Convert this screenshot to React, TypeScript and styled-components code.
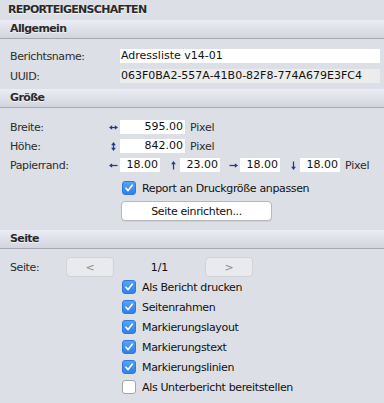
import React from 'react';
import styled, { createGlobalStyle } from 'styled-components';

const GlobalStyle = createGlobalStyle`
  html, body {
    margin: 0;
    padding: 0;
    background: #dcdfe5;
  }
  body {
    font-family: "DejaVu Sans", Verdana, sans-serif;
    font-size: 11px;
    color: #262626;
  }
`;

type Dir = 'left' | 'right' | 'up' | 'down' | 'horizontal' | 'vertical';

const rotation: Record<Dir, number> = {
  right: 0,
  down: 90,
  left: 180,
  up: 270,
  horizontal: 0,
  vertical: 90,
};

function Arrow({ dir }: { dir: Dir }) {
  const both = dir === 'horizontal' || dir === 'vertical';
  return (
    <ArrowSvg viewBox="0 0 10 10" $deg={rotation[dir]}>
      <line x1={both ? 3 : 0.5} y1="5" x2="7" y2="5" stroke="#1f3c8c" strokeWidth="1.4" />
      <polygon points="10,5 6.5,2.4 6.5,7.6" fill="#1f3c8c" />
      {both && <polygon points="0,5 3.5,2.4 3.5,7.6" fill="#1f3c8c" />}
    </ArrowSvg>
  );
}

function Checkbox({ checked, label }: { checked: boolean; label: string }) {
  return (
    <CheckRow>
      <Box $checked={checked}>
        {checked && (
          <svg width="10" height="10" viewBox="0 0 10 10">
            <path d="M2 5.2 L4.1 7.6 L8.2 2.2" fill="none" stroke="#fff" strokeWidth="1.6" strokeLinecap="round" strokeLinejoin="round" />
          </svg>
        )}
      </Box>
      <CheckLabel>{label}</CheckLabel>
    </CheckRow>
  );
}

const margins: { dir: Dir; value: string }[] = [
  { dir: 'left', value: '18.00' },
  { dir: 'up', value: '23.00' },
  { dir: 'right', value: '18.00' },
  { dir: 'down', value: '18.00' },
];

const pageOptions = [
  { label: 'Als Bericht drucken', checked: true },
  { label: 'Seitenrahmen', checked: true },
  { label: 'Markierungslayout', checked: true },
  { label: 'Markierungstext', checked: true },
  { label: 'Markierungslinien', checked: true },
  { label: 'Als Unterbericht bereitstellen', checked: false },
];

export default function App() {
  return (
    <Panel>
      <GlobalStyle />
      <Title>REPORTEIGENSCHAFTEN</Title>

      <SectionHeader>Allgemein</SectionHeader>
      <Body $top={10} $bottom={6} $gap={6}>
        <Row>
          <Label>Berichtsname:</Label>
          <Field>Adressliste v14-01</Field>
        </Row>
        <Row>
          <Label>UUID:</Label>
          <Field $readOnly>063F0BA2-557A-41B0-82F8-774A679E3FC4</Field>
        </Row>
      </Body>

      <SectionHeader>Größe</SectionHeader>
      <Body $top={12} $bottom={9} $gap={5}>
        <Row>
          <Label $width={90}>Breite:</Label>
          <ArrowCell><Arrow dir="horizontal" /></ArrowCell>
          <Field $width={65} $right>595.00</Field>
          <Unit>Pixel</Unit>
        </Row>
        <Row>
          <Label $width={90}>Höhe:</Label>
          <ArrowCell><Arrow dir="vertical" /></ArrowCell>
          <Field $width={65} $right>842.00</Field>
          <Unit>Pixel</Unit>
        </Row>
        <Row>
          <Label $width={90}>Papierrand:</Label>
          {margins.map((m, i) => (
            <React.Fragment key={i}>
              <ArrowCell><Arrow dir={m.dir} /></ArrowCell>
              <Field $width={40} $right>{m.value}</Field>
            </React.Fragment>
          ))}
          <Unit>Pixel</Unit>
        </Row>
        <ReportCheck>
          <Checkbox checked label="Report an Druckgröße anpassen" />
        </ReportCheck>
        <PushButton>Seite einrichten...</PushButton>
      </Body>

      <SectionHeader>Seite</SectionHeader>
      <Body $top={8} $bottom={6} $gap={0}>
        <PagerRow>
          <Label $width={56}>Seite:</Label>
          <NavButton>&lt;</NavButton>
          <PageCount>1/1</PageCount>
          <NavButton>&gt;</NavButton>
        </PagerRow>
        {pageOptions.map((o) => (
          <Checkbox key={o.label} checked={o.checked} label={o.label} />
        ))}
      </Body>
    </Panel>
  );
}

const Panel = styled.div`
  width: 384px;
  display: flex;
  flex-direction: column;
  background: #dcdfe5;
`;

const Title = styled.div`
  height: 20px;
  box-sizing: border-box;
  padding: 3px 8px 0;
  line-height: 13px;
  font-weight: bold;
  letter-spacing: -0.7px;
  color: #2a2a2a;
  text-shadow: 0 1px 1px rgba(255, 255, 255, 0.7);
`;

const SectionHeader = styled.div`
  height: 18px;
  line-height: 18px;
  padding: 0 10px;
  background: linear-gradient(#ebecf4, #d3d5de);
  border-bottom: 1px solid #a6a9b0;
  font-weight: bold;
  letter-spacing: -0.6px;
  color: #2a2a2a;
  text-shadow: 0 1px 1px rgba(255, 255, 255, 0.7);
`;

const Body = styled.div<{ $top: number; $bottom: number; $gap: number }>`
  display: flex;
  flex-direction: column;
  gap: ${({ $gap }) => $gap}px;
  padding: ${({ $top }) => $top}px 4px ${({ $bottom }) => $bottom}px 10px;
`;

const Row = styled.div`
  display: flex;
  align-items: center;
  height: 14px;
`;

const Label = styled.div<{ $width?: number }>`
  flex: none;
  width: ${({ $width = 110 }) => $width}px;
  letter-spacing: -0.4px;
  color: #2c2c2c;
`;

const Field = styled.div<{ $readOnly?: boolean; $width?: number; $right?: boolean }>`
  ${({ $width }) => ($width ? `width: ${$width}px; flex: none;` : 'flex: 1;')}
  box-sizing: border-box;
  height: 14px;
  line-height: 14px;
  padding: 0 2px 0 1px;
  text-align: ${({ $right }) => ($right ? 'right' : 'left')};
  background: ${({ $readOnly }) => ($readOnly ? '#ececec' : '#ffffff')};
  color: #111;
  white-space: nowrap;
  overflow: hidden;
`;

const ArrowCell = styled.div`
  flex: none;
  width: 20px;
  display: flex;
  justify-content: flex-end;
  padding-right: 2px;
  box-sizing: border-box;
`;

const ArrowSvg = styled.svg<{ $deg: number }>`
  width: 9px;
  height: 9px;
  transform: rotate(${({ $deg }) => $deg}deg);
`;

const Unit = styled.span`
  margin-left: 5px;
  letter-spacing: -0.2px;
  color: #2c2c2c;
`;

const ReportCheck = styled.div`
  margin-top: 3px;
  height: 16px;
  display: flex;
  align-items: center;
`;

const CheckRow = styled.div`
  display: flex;
  align-items: center;
  gap: 6px;
  height: 20px;
  padding-left: 112px;
`;

const Box = styled.span<{ $checked: boolean }>`
  flex: none;
  width: 14px;
  height: 14px;
  box-sizing: border-box;
  border-radius: 3px;
  display: flex;
  align-items: center;
  justify-content: center;
  background: ${({ $checked }) => ($checked ? 'linear-gradient(#55a3f7, #2f7fe9)' : '#ffffff')};
  border: 1px solid ${({ $checked }) => ($checked ? '#2f78dc' : '#a5a5a5')};
`;

const CheckLabel = styled.span`
  letter-spacing: -0.35px;
  color: #111;
`;

const PushButton = styled.div`
  width: 151px;
  height: 20px;
  box-sizing: border-box;
  margin-left: 111px;
  display: flex;
  align-items: center;
  justify-content: center;
  background: #ffffff;
  border: 1px solid #b7b8bb;
  border-radius: 4px;
  box-shadow: 0 1px 0 rgba(0, 0, 0, 0.06);
  letter-spacing: -0.35px;
  color: #111;
`;

const PagerRow = styled.div`
  display: flex;
  align-items: center;
  height: 20px;
`;

const NavButton = styled.div`
  flex: none;
  width: 48px;
  height: 20px;
  box-sizing: border-box;
  display: flex;
  align-items: center;
  justify-content: center;
  background: #e9eaed;
  border: 1px solid #d0d2d6;
  border-radius: 4px;
  color: #8c8c8c;
`;

const PageCount = styled.div`
  flex: none;
  width: 91px;
  text-align: center;
  color: #111;
`;
